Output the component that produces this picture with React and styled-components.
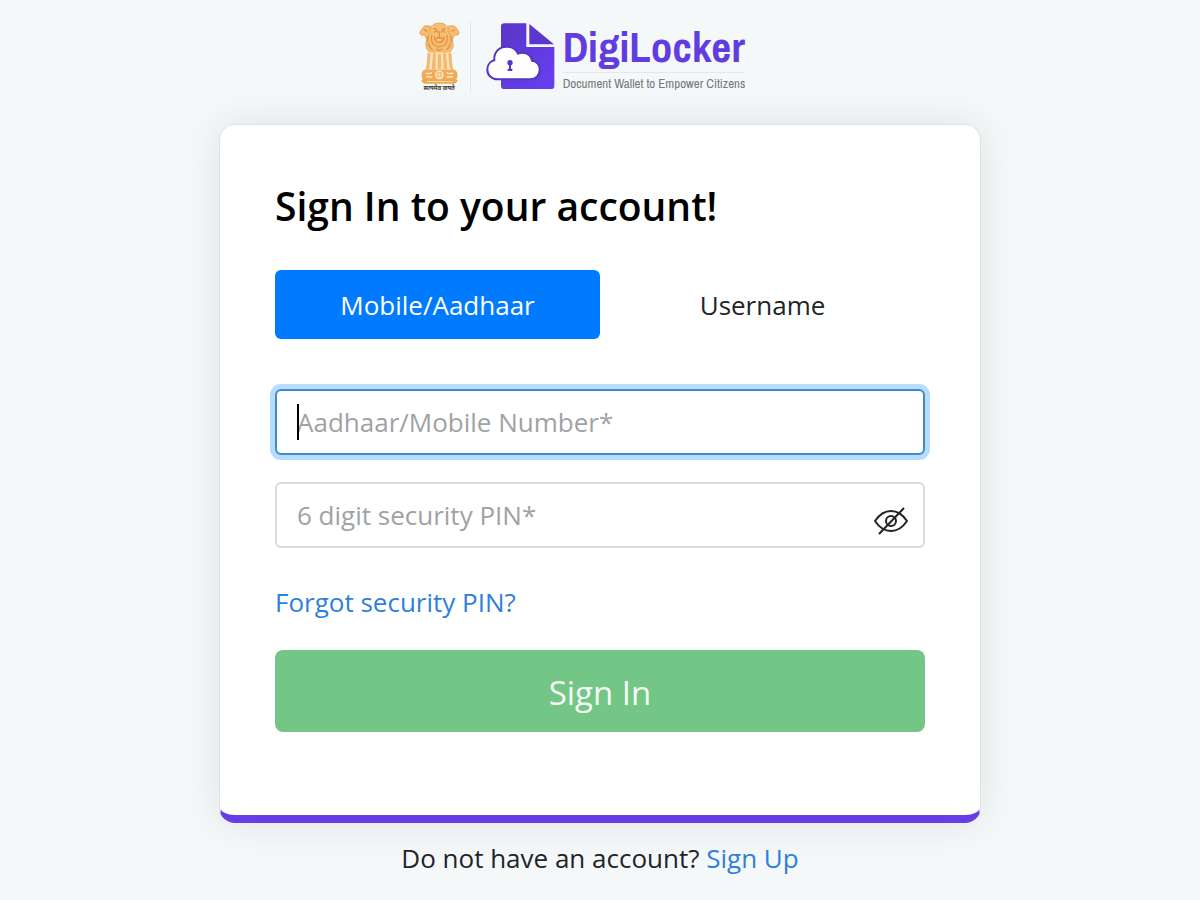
import React, { useState } from "react";
import styled, { createGlobalStyle } from "styled-components";

const GlobalStyle = createGlobalStyle`
  * {
    box-sizing: border-box;
  }

  body {
    margin: 0;
    background: #f4f8f9;
    color: #212529;
    font-family: "Open Sans", "Noto Sans", sans-serif;
    font-size: 26px;
    line-height: 36px;
  }

  button,
  input {
    font: inherit;
  }
`;

const Page = styled.div`
  display: flex;
  flex-direction: column;
  align-items: center;
  padding: 22px 16px;
`;

const Brand = styled.header`
  display: flex;
  align-items: flex-start;
  margin-bottom: 29px;
  padding-right: 36px;
`;

const EmblemBox = styled.div`
  display: flex;
  flex-direction: column;
  align-items: center;
  height: 71px;
  padding-right: 10px;
  margin-right: 15px;
  border-right: 1px solid #e3e9eb;
`;

const Motto = styled.span`
  color: #3a3632;
  font-family: "Noto Sans Devanagari", "Noto Sans", sans-serif;
  font-size: 6px;
  font-weight: 700;
  line-height: 8px;
  white-space: nowrap;
`;

const BrandText = styled.div`
  display: flex;
  flex-direction: column;
  margin-left: 7px;
  font-family: "Liberation Sans Narrow", "Archivo Narrow", "Roboto Condensed", "Open Sans Condensed", Roboto, sans-serif;
`;

const BrandName = styled.span`
  color: #613de0;
  font-size: 43px;
  font-weight: 700;
  line-height: 48px;
  padding-bottom: 2px;
  border-bottom: 1px solid #e3e9eb;
`;

const Tagline = styled.span`
  color: #77797c;
  font-size: 13px;
  line-height: 22px;
`;

const Card = styled.main`
  width: 100%;
  max-width: 762px;
  padding: 53px 55px 83px;
  background: #fff;
  border: 1px solid #e1e2e5;
  border-bottom: 8px solid #673de6;
  border-radius: 16px;
  box-shadow: 0 0 40px rgba(0, 0, 0, 0.09);
`;

const Title = styled.h1`
  margin: 0 0 36px;
  color: #000;
  font-size: 39px;
  font-weight: 600;
  line-height: 56px;
`;

const Tabs = styled.div`
  display: flex;
  margin-bottom: 50px;
`;

const Tab = styled.button`
  flex: 1;
  height: 69px;
  padding: 0;
  border: 0;
  border-radius: 6px;
  background: ${props => (props.$active ? "#007bff" : "transparent")};
  color: ${props => (props.$active ? "#fff" : "#212529")};
  cursor: pointer;
`;

const Field = styled.div`
  position: relative;
  margin-bottom: 27px;
`;

/* thin insertion bar shown while the focused field is still empty */
const Caret = styled.span`
  display: none;
  position: absolute;
  top: 15px;
  left: 22px;
  width: 2px;
  height: 36px;
  background: #000;
  pointer-events: none;
`;

const Input = styled.input`
  display: block;
  width: 100%;
  height: 66px;
  padding: 0 20px;
  border: 2px solid #d7dce0;
  border-radius: 6px;
  background: #fff;
  color: #495057;
  outline: none;

  &::placeholder {
    color: #9fa2a5;
    opacity: 1;
  }

  &:focus {
    border-color: #3d8bd0;
    box-shadow: 0 0 0 5px #b8dcfc;
  }

  &:focus:placeholder-shown {
    caret-color: transparent;
  }

  &:focus:placeholder-shown + ${Caret} {
    display: block;
  }
`;

const EyeButton = styled.button`
  position: absolute;
  right: 16px;
  bottom: 12px;
  display: flex;
  padding: 0;
  border: 0;
  background: none;
  cursor: pointer;
`;

const Link = styled.a`
  color: #2f7fdc;
  text-decoration: none;
`;

const Forgot = styled.p`
  margin: 36px 0 30px;
`;

const Submit = styled.button`
  display: block;
  width: 100%;
  height: 82px;
  padding: 4px 0 0;
  border: 0;
  border-radius: 8px;
  background: #74c686;
  color: #f3fbf4;
  font-size: 33px;
  cursor: pointer;
`;

const SignUp = styled.p`
  margin: 17px 0 0;
`;

const Emblem = () => (
  <svg width="41" height="63" viewBox="0 0 123 186" aria-hidden="true">
    <g fill="#f5bd76" stroke="#eca352" strokeWidth="3">
      {/* side lions */}
      <path d="M22 10c-7-1-10 6-14 11-5 5-7 12-3 15 4 4 9 0 13 3l5 13c-4 12-3 24 4 33l17 9V12z" />
      <path d="M101 10c7-1 10 6 14 11 5 5 7 12 3 15-4 4-9 0-13 3l-5 13c4 12 3 24-4 33l-17 9V12z" />
      {/* front lion */}
      <path d="M61 2c-12 0-19 3-22 11-7 3-9 10-6 17-8 8-10 19-5 27-3 12 5 21 12 26 6 8 12 12 21 12s15-4 21-12c7-5 15-14 12-26 5-8 3-19-5-27 3-7 1-14-6-17C80 5 73 2 61 2z" />
    </g>
    <g fill="none" stroke="#e6953a" strokeWidth="4" strokeLinecap="round">
      <path d="M43 17l10 6M80 17l-10 6M46 29c4-4 8-4 10 0M67 29c3-4 7-4 10 0M61 27v16l-7 5h14l-7-5M47 43c1 12 7 17 14 17s13-5 14-17M38 39c-2 11 0 21 7 29M84 39c2 11 0 21-7 29M50 69c7 5 15 5 22 0M53 80c5 4 11 4 17 0M16 22l8 4M107 22l-8 4M28 42l-3 14M95 42l3 14M30 65c1 8 4 12 9 15M93 65c-1 8-4 12-9 15" />
    </g>
    <g fill="#fbe3bd">
      <path d="M55 50c3 4 9 4 12 0-3 0-9 0-12 0zM37 12l8-1-4 6zM86 12l-8-1 4 6z" />
      <path d="M29 90h65l5 51H23z" />
    </g>
    <g fill="#f4b970">
      <path d="M26 89l9 4-4 45-11 5c4-17 4-35 6-54z" />
      <path d="M97 89l-9 4 4 45 11 5c-4-17-4-35-6-54z" />
      <path d="M42 92h9l-2 48H38zM72 92h9l4 48H74zM57 94h9l1 45H56z" />
    </g>
    <rect x="8" y="141" width="107" height="34" rx="13" fill="#f0ab55" />
    <g fill="none" stroke="#fdebd0" strokeWidth="4">
      <circle cx="61" cy="157" r="11" />
      <path d="M61 146v22M50 157h22M53 149l16 16M69 149l-16 16" strokeWidth="2" />
      <path d="M20 154c5-6 9 5 18-4M22 164c6-6 10 3 18-1M83 150c9 9 13-2 20 4M83 163c8 4 12-5 18 1" />
    </g>
    <path d="M7 173c8-5 14-3 21-1h67c7-2 13-4 21 1-2 7-8 11-15 11H22c-7 0-13-4-15-11z" fill="#eea84e" />
    <path d="M24 177h76" stroke="#fbd9a4" strokeWidth="3" />
  </svg>
);

const DocumentCloud = () => (
  <svg width="70" height="68" viewBox="242 37 210 204" aria-hidden="true">
    <defs>
      <linearGradient id="doc" x1="0" y1="0" x2="1" y2="1">
        <stop offset="0" stopColor="#5a35c8" />
        <stop offset="1" stopColor="#6740f2" />
      </linearGradient>
    </defs>
    <path d="M297 41h66v71h84v118q0 8-8 8H297q-10 0-10-10V51q0-10 10-10z" fill="url(#doc)" />
    <path d="M372 43l74 61h-74z" fill="#5b37cf" />
    <path
      d="M277 209c-18 0-31-13-31-29 0-14 9-25 21-28-2-25 15-41 37-41 16 0 28 8 34 21 20-8 39 2 42 21 15 2 23 13 23 27 0 17-12 29-29 29z"
      fill="#fff"
      stroke="#5635c0"
      strokeWidth="6"
    />
    <circle cx="314" cy="159" r="8" fill="#5635c0" />
    <path d="M311 160h6v17h4v7h-14v-7h4z" fill="#5635c0" />
  </svg>
);

const EyeOff = () => (
  <svg width="36" height="30" viewBox="0 0 36 30" fill="none" stroke="#222" strokeWidth="2" aria-hidden="true">
    <path d="M2 15C6 9 11 5 18 5s12 4 16 10c-4 6-9 10-16 10S6 21 2 15z" strokeLinejoin="round" />
    <circle cx="18" cy="15" r="5" />
    <path d="M6 28L31 2" />
  </svg>
);

const App = () => {
  const [tab, setTab] = useState("mobile");
  const [showPin, setShowPin] = useState(false);

  return (
    <>
      <GlobalStyle />
      <Page>
        <Brand>
          <EmblemBox>
            <Emblem />
            <Motto lang="hi">सत्यमेव जयते</Motto>
          </EmblemBox>
          <DocumentCloud />
          <BrandText>
            <BrandName>DigiLocker</BrandName>
            <Tagline>Document Wallet to Empower Citizens</Tagline>
          </BrandText>
        </Brand>

        <Card>
          <Title>Sign In to your account!</Title>
          <form onSubmit={e => e.preventDefault()}>
            <Tabs>
              <Tab type="button" $active={tab === "mobile"} onClick={() => setTab("mobile")}>
                Mobile/Aadhaar
              </Tab>
              <Tab type="button" $active={tab === "username"} onClick={() => setTab("username")}>
                Username
              </Tab>
            </Tabs>
            <Field>
              <Input
                autoFocus
                type="text"
                aria-label="Aadhaar/Mobile Number"
                placeholder={tab === "mobile" ? "Aadhaar/Mobile Number*" : "Username*"}
              />
              <Caret />
            </Field>
            <Field>
              <Input
                type={showPin ? "text" : "password"}
                aria-label="6 digit security PIN"
                placeholder="6 digit security PIN*"
              />
              <Caret />
              <EyeButton type="button" aria-label="Show PIN" onClick={() => setShowPin(!showPin)}>
                <EyeOff />
              </EyeButton>
            </Field>
            <Forgot>
              <Link href="#forgot">Forgot security PIN?</Link>
            </Forgot>
            <Submit type="submit">Sign In</Submit>
          </form>
        </Card>

        <SignUp>
          Do not have an account? <Link href="#signup">Sign Up</Link>
        </SignUp>
      </Page>
    </>
  );
};

export default App;
